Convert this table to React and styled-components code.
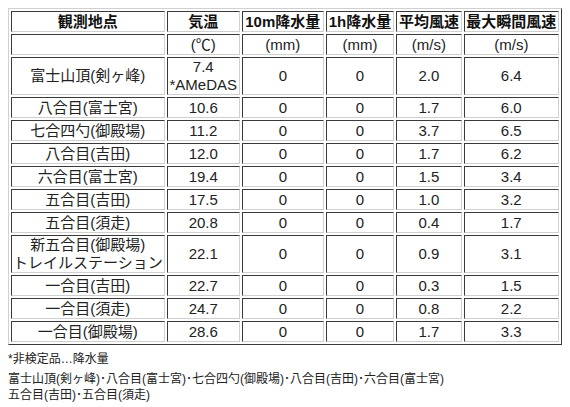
import React from 'react';
import styled, { createGlobalStyle } from 'styled-components';

const GlobalStyle = createGlobalStyle`
  body {
    margin: 8px;
    background: #ffffff;
    color: #1a1a1a;
    font-family: "Liberation Sans", "Noto Sans CJK JP", sans-serif;
  }
`;

const Table = styled.table`
  border-collapse: separate;
  border-spacing: 2px;
  border-style: solid;
  border-width: 1px;
  border-color: #d0d0d0 #3a3a3a #3a3a3a #d0d0d0;
  font-size: 15px;
  line-height: 17px;
`;

const Cell = styled.td`
  width: ${(p) => p.$w}px;
  box-sizing: border-box;
  padding: ${(p) => (p.$multi ? '0 1px' : '1px')};
  line-height: ${(p) => (p.$multi ? '18px' : '17px')};
  text-align: center;
  vertical-align: middle;
  white-space: nowrap;
  border-style: solid;
  border-width: 1px;
  border-color: #3a3a3a #d0d0d0 #d0d0d0 #3a3a3a;
  font-weight: ${(p) => (p.$head ? 700 : 400)};
  color: ${(p) => (p.$head ? '#111' : '#222')};
`;

const Notes = styled.div`
  margin-top: 6px;
  font-size: 12px;
  line-height: 16px;
  color: #222;
`;

const NoteLead = styled.div`
  margin-bottom: 4px;
`;

const widths = [138, 76, 88, 72, 68, 98];

const headers = ['観測地点', '気温', '10m降水量', '1h降水量', '平均風速', '最大瞬間風速'];
const units = ['', '(℃)', '(mm)', '(mm)', '(m/s)', '(m/s)'];

const rows = [
  [['富士山頂(剣ヶ峰)'], ['7.4', '*AMeDAS'], '0', '0', '2.0', '6.4'],
  [['八合目(富士宮)'], ['10.6'], '0', '0', '1.7', '6.0'],
  [['七合四勺(御殿場)'], ['11.2'], '0', '0', '3.7', '6.5'],
  [['八合目(吉田)'], ['12.0'], '0', '0', '1.7', '6.2'],
  [['六合目(富士宮)'], ['19.4'], '0', '0', '1.5', '3.4'],
  [['五合目(吉田)'], ['17.5'], '0', '0', '1.0', '3.2'],
  [['五合目(須走)'], ['20.8'], '0', '0', '0.4', '1.7'],
  [['新五合目(御殿場)', 'トレイルステーション'], ['22.1'], '0', '0', '0.9', '3.1'],
  [['一合目(吉田)'], ['22.7'], '0', '0', '0.3', '1.5'],
  [['一合目(須走)'], ['24.7'], '0', '0', '0.8', '2.2'],
  [['一合目(御殿場)'], ['28.6'], '0', '0', '1.7', '3.3'],
];

const Lines = ({ value }) =>
  Array.isArray(value)
    ? value.map((line, i) => (
        <React.Fragment key={i}>
          {i > 0 && <br />}
          {line}
        </React.Fragment>
      ))
    : value;

const isMulti = (row) => row.some((v) => Array.isArray(v) && v.length > 1);

const App = () => (
  <>
    <GlobalStyle />
    <Table>
      <tbody>
        <tr>
          {headers.map((h, i) => (
            <Cell key={h} $head $w={widths[i]}>{h}</Cell>
          ))}
        </tr>
        <tr>
          {units.map((u, i) => (
            <Cell key={i} $w={widths[i]}>{u}</Cell>
          ))}
        </tr>
        {rows.map((row, r) => (
          <tr key={r}>
            {row.map((v, i) => (
              <Cell key={i} $w={widths[i]} $multi={isMulti(row)}>
                <Lines value={v} />
              </Cell>
            ))}
          </tr>
        ))}
      </tbody>
    </Table>
    <Notes>
      <NoteLead>*非検定品…降水量</NoteLead>
      <div>富士山頂(剣ヶ峰)･八合目(富士宮)･七合四勺(御殿場)･八合目(吉田)･六合目(富士宮)</div>
      <div>五合目(吉田)･五合目(須走)</div>
    </Notes>
  </>
);

export default App;
